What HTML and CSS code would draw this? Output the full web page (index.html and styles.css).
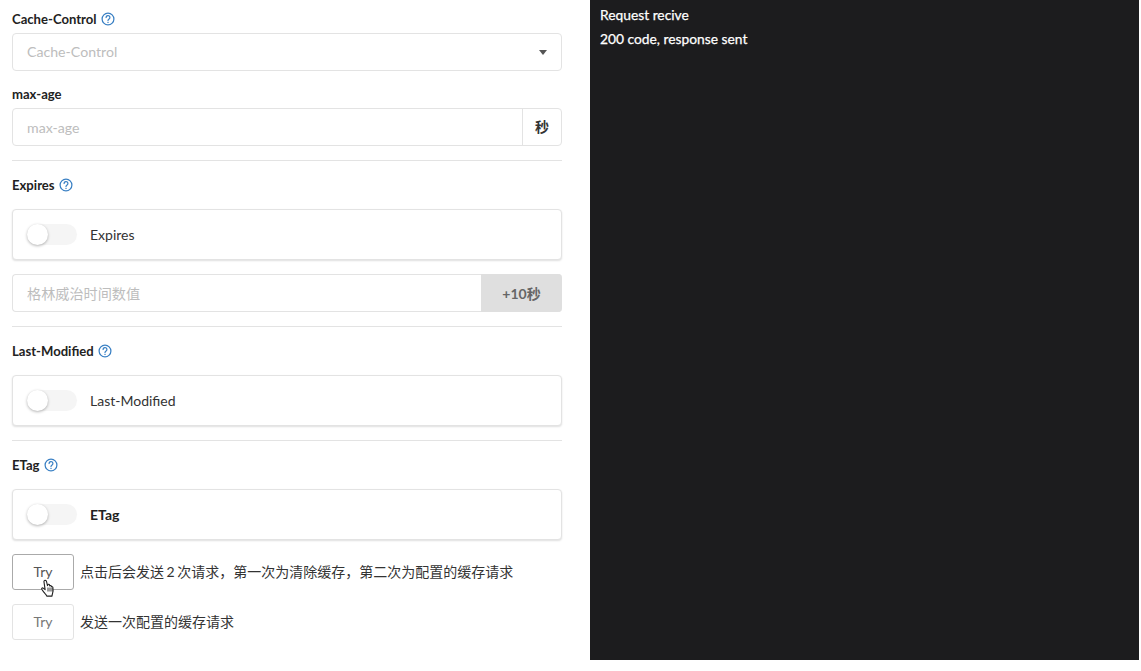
FILE: index.html
```html
<!DOCTYPE html>
<html lang="zh">
<head>
<meta charset="utf-8">
<title>Cache</title>
<link rel="stylesheet" href="styles.css">
</head>
<body>
<div class="app">
  <main class="form">
    <div class="label label-first">Cache-Control
      <svg class="help" viewBox="0 0 14 14"><circle cx="7" cy="7" r="5.9"/><path d="M5.1 5.5a1.9 1.9 0 1 1 3 1.5c-.7.5-1.1.8-1.1 1.6"/><circle class="dot" cx="7" cy="10.4" r=".7"/></svg>
    </div>
    <div class="field select"><span class="ph">Cache-Control</span><span class="caret"></span></div>
    <div class="label label-sub">max-age</div>
    <div class="field group"><span class="ph grow">max-age</span><span class="addon">秒</span></div>
    <hr class="rule">
    <div class="label">Expires
      <svg class="help" viewBox="0 0 14 14"><circle cx="7" cy="7" r="5.9"/><path d="M5.1 5.5a1.9 1.9 0 1 1 3 1.5c-.7.5-1.1.8-1.1 1.6"/><circle class="dot" cx="7" cy="10.4" r=".7"/></svg>
    </div>
    <div class="card"><span class="switch"><span class="knob"></span></span><span class="card-text">Expires</span></div>
    <div class="field group gmt"><span class="ph grow">格林威治时间数值</span><span class="plus">+10秒</span></div>
    <hr class="rule">
    <div class="label">Last-Modified
      <svg class="help" viewBox="0 0 14 14"><circle cx="7" cy="7" r="5.9"/><path d="M5.1 5.5a1.9 1.9 0 1 1 3 1.5c-.7.5-1.1.8-1.1 1.6"/><circle class="dot" cx="7" cy="10.4" r=".7"/></svg>
    </div>
    <div class="card"><span class="switch"><span class="knob"></span></span><span class="card-text">Last-Modified</span></div>
    <hr class="rule">
    <div class="label">ETag
      <svg class="help" viewBox="0 0 14 14"><circle cx="7" cy="7" r="5.9"/><path d="M5.1 5.5a1.9 1.9 0 1 1 3 1.5c-.7.5-1.1.8-1.1 1.6"/><circle class="dot" cx="7" cy="10.4" r=".7"/></svg>
    </div>
    <div class="card"><span class="switch"><span class="knob"></span></span><span class="card-text strong">ETag</span></div>
    <div class="try-row first">
      <button class="try hover">Try</button><span class="note">点击后会发送 2 次请求，第一次为清除缓存，第二次为配置的缓存请求</span>
      <svg class="cursor" viewBox="0 0 16 20"><path d="M5 1.600c.9-.6 1.800 0 2 .9l1 4.200.3-1c.5-.7 1.500-.5 1.700.3l.2.9c.4-.6 1.400-.5 1.600.3l.1.7c.5-.4 1.400-.2 1.500.6.3 2 .2 4.300-.4 6.100-.3 1-.5 1.700-.5 2.500H7.300c-.3-1-.9-1.700-1.700-2.500-1.100-1.200-2.500-2.900-3.300-4.300-.4-.8.4-1.700 1.300-1.200l2 1.500L4.500 3c-.2-.6 0-1.100.5-1.400z"/><path class="ln" d="M8.500 8.500v4M10.500 8.500v4M12.500 9v3.500"/></svg>
    </div>
    <div class="try-row">
      <button class="try">Try</button><span class="note">发送一次配置的缓存请求</span>
    </div>
  </main>
  <aside class="log">
    <div class="log-line">Request recive</div>
    <div class="log-line">200 code, response sent</div>
  </aside>
</div>
</body>
</html>
```
FILE: styles.css
```css
* { box-sizing: border-box; }
html, body { margin: 0; padding: 0; background: #fff; }
body {
  width: 1141px;
  height: 671px;
  overflow: hidden;
  font-family: Lato, "Noto Sans CJK SC", sans-serif;
  font-size: 14px;
  color: #222;
}
.app { display: flex; height: 660px; }
.form { width: 590px; padding: 0 28px 0 12px; flex: none; }
.log {
  width: 549px;
  flex: none;
  background: #1c1c1e;
  color: #fff;
  padding: 3px 10px;
}
.log-line { line-height: 24px; font-size: 13.800px; -webkit-text-stroke: .25px #fff; }
.label {
  display: flex;
  align-items: center;
  gap: 4px;
  height: 20px;
  margin-bottom: 14px;
  font-size: 13.100px;
  font-weight: 700;
  color: #222;
}
.label-first { margin-top: 9px; margin-bottom: 4px; }
.label-sub { margin-top: 13px; margin-bottom: 4px; height: 20px; }
.help { width: 14px; height: 14px; fill: none; stroke: #3a80c4; stroke-width: 1.250; stroke-linecap: round; }
.help .dot { fill: #3a80c4; stroke: none; }
.field {
  display: flex;
  align-items: center;
  height: 38px;
  border: 1px solid #e3e3e3;
  border-radius: 4px;
  background: #fff;
}
.ph { color: #bdbdbd; padding-left: 14px; font-size: 14.150px; }
.select .ph { padding-bottom: 2px; }
.grow { flex: 1; }
.select { justify-content: space-between; padding-right: 14px; }
.caret { width: 0; height: 0; border: 4px solid transparent; border-top: 5px solid #555; border-bottom: 0; }
.addon {
  width: 39px;
  height: 100%;
  display: flex;
  align-items: center;
  justify-content: center;
  padding-bottom: 2px;
  border-left: 1px solid #e3e3e3;
  font-size: 14px;
  font-weight: 700;
  color: #333;
}
.rule { border: 0; border-top: 1px solid #e3e3e3; margin: 14px 0 14px; }
.rule + .label { margin-bottom: 14px; }
.card {
  display: flex;
  align-items: center;
  height: 51px;
  padding-left: 14px;
  gap: 13px;
  border: 1px solid #e3e3e3;
  border-radius: 4px;
  box-shadow: 0 1px 2px rgba(0, 0, 0, .13);
  background: #fff;
}
.card-text { font-size: 14px; color: #333; }
.strong { font-weight: 700; color: #222; }
.switch { width: 50px; height: 21px; border-radius: 11px; background: #f5f5f5; display: block; }
.knob {
  display: block;
  width: 21px;
  height: 21px;
  border-radius: 50%;
  background: #fff;
  box-shadow: 0 1px 3px rgba(0, 0, 0, .3);
}
.gmt { margin-top: 14px; border-right: 0; }
.plus {
  width: 81px;
  height: 38px;
  display: flex;
  align-items: center;
  justify-content: center;
  padding-bottom: 1px;
  background: #dfdfdf;
  color: #666;
  font-size: 14px;
  font-weight: 700;
  border-radius: 0 4px 4px 0;
}
.try-row { position: relative; display: flex; align-items: center; gap: 6px; height: 36px; margin-top: 14px; }
.try {
  width: 62px;
  height: 36px;
  border: 1px solid #e3e3e3;
  border-radius: 3px;
  background: #fff;
  font: inherit;
  color: #777;
  padding: 0 0 2px;
}
.try.hover { border-color: #aaa; color: #555; }
.note { font-size: 14px; color: #333; word-spacing: -1px; padding-bottom: 2px; }
.cursor {
  position: absolute;
  left: 27px;
  top: 25px;
  width: 17px;
  height: 20px;
  fill: #fff;
  stroke: #222;
  stroke-width: 1.150;
  stroke-linejoin: round;
}
.cursor .ln { fill: none; stroke-width: .9; }
```
